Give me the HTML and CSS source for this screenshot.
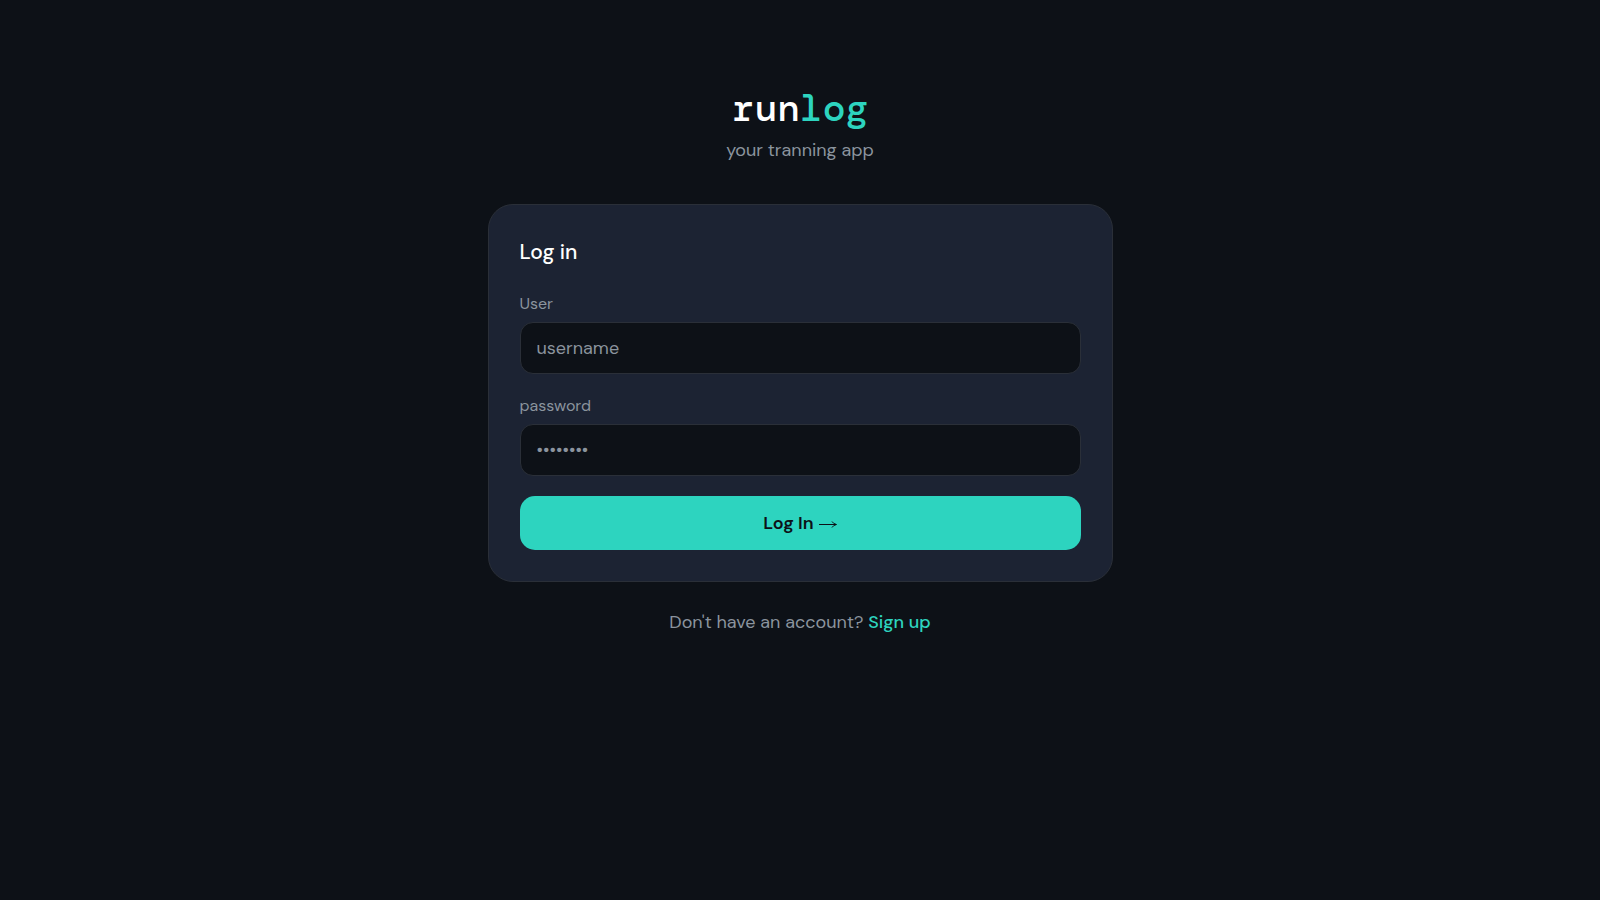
FILE: index.html
```html
<!DOCTYPE html>
<html lang="en">
<head>
    <meta charset="UTF-8">
    <meta name="viewport" content="width=device-width, initial-scale=1.0">
    <title>runlog - Log in</title>
    <link rel="stylesheet" href="styles.css">
</head>
<body>

<main class="page">
    <header class="brand">
        <h1 class="logo">run<span>log</span></h1>
        <p class="tagline">your tranning app</p>
    </header>

    <form class="card">
        <h2 class="card-title">Log in</h2>

        <div class="field">
            <label for="username">User</label>
            <input type="text" id="username" name="username" placeholder="username">
        </div>

        <div class="field">
            <label for="password">password</label>
            <input type="password" id="password" name="password" placeholder="••••••••">
        </div>

        <button type="submit" class="main-btn">
            Log In
            <svg class="arrow" width="18" height="10" viewBox="0 0 18 10" aria-hidden="true">
                <path d="M0 6.5H17M13 3.5Q14.5 6 17.5 6.5Q14.5 7 13 9.5" />
            </svg>
        </button>
    </form>

    <p class="switch">Don't have an account? <a href="#signup">Sign up</a></p>
</main>

</body>
</html>
```
FILE: styles.css
```css
:root {
    --bg: #0d1117;
    --card: #1c2333;
    --line: #2a2f38;
    --primary: #2dd4bf;
    --text: #ffffff;
    --dim: #8b949e;
}

* {
    box-sizing: border-box;
    margin: 0;
    padding: 0;
}

body {
    min-height: 100vh;
    background: var(--bg);
    color: var(--text);
    font-family: "DM Sans", Inter, sans-serif;
    font-size: 18px;
    line-height: 28px;
}

.page {
    width: 100%;
    max-width: 657px;
    margin: 0 auto;
    padding: 80px 16px;
}

/* logo and tagline */
.brand {
    margin-bottom: 40px;
    text-align: center;
}

.logo {
    font-family: "DM Mono", "IBM Plex Mono", "Liberation Mono", monospace;
    font-size: 38px;
    font-weight: 700;
    line-height: 56px;
}

.logo span { color: var(--primary); }

.tagline, .switch { color: var(--dim); }

/* login form */
.card {
    display: flex;
    flex-direction: column;
    gap: 20px;
    padding: 31px;
    background: var(--card);
    border: 1px solid var(--line);
    border-radius: 25px;
}

.card-title {
    margin-bottom: 4px;
    font-size: 21px;
    font-weight: 500;
    line-height: 32px;
}

.field {
    display: flex;
    flex-direction: column;
    gap: 6px;
}

.field label {
    color: var(--dim);
    font-size: 16px;
    line-height: 24px;
}

.field input {
    width: 100%;
    height: 52px;
    padding: 0 16px;
    background: var(--bg);
    border: 1px solid var(--line);
    border-radius: 13px;
    color: var(--text);
    font: inherit;
    outline: none;
}

.field input::placeholder { color: var(--dim); }
.field input:focus { border-color: var(--primary); }

.main-btn {
    display: flex;
    align-items: center;
    justify-content: center;
    gap: 5px;
    height: 54px;
    background: var(--primary);
    border: none;
    border-radius: 15px;
    color: var(--bg);
    font: inherit;
    font-weight: 600;
    cursor: pointer;
}

.arrow {
    fill: none;
    stroke: currentColor;
    stroke-width: 1;
}

.switch {
    margin-top: 26px;
    text-align: center;
}

.switch a {
    color: var(--primary);
    font-weight: 500;
    text-decoration: none;
}
```
